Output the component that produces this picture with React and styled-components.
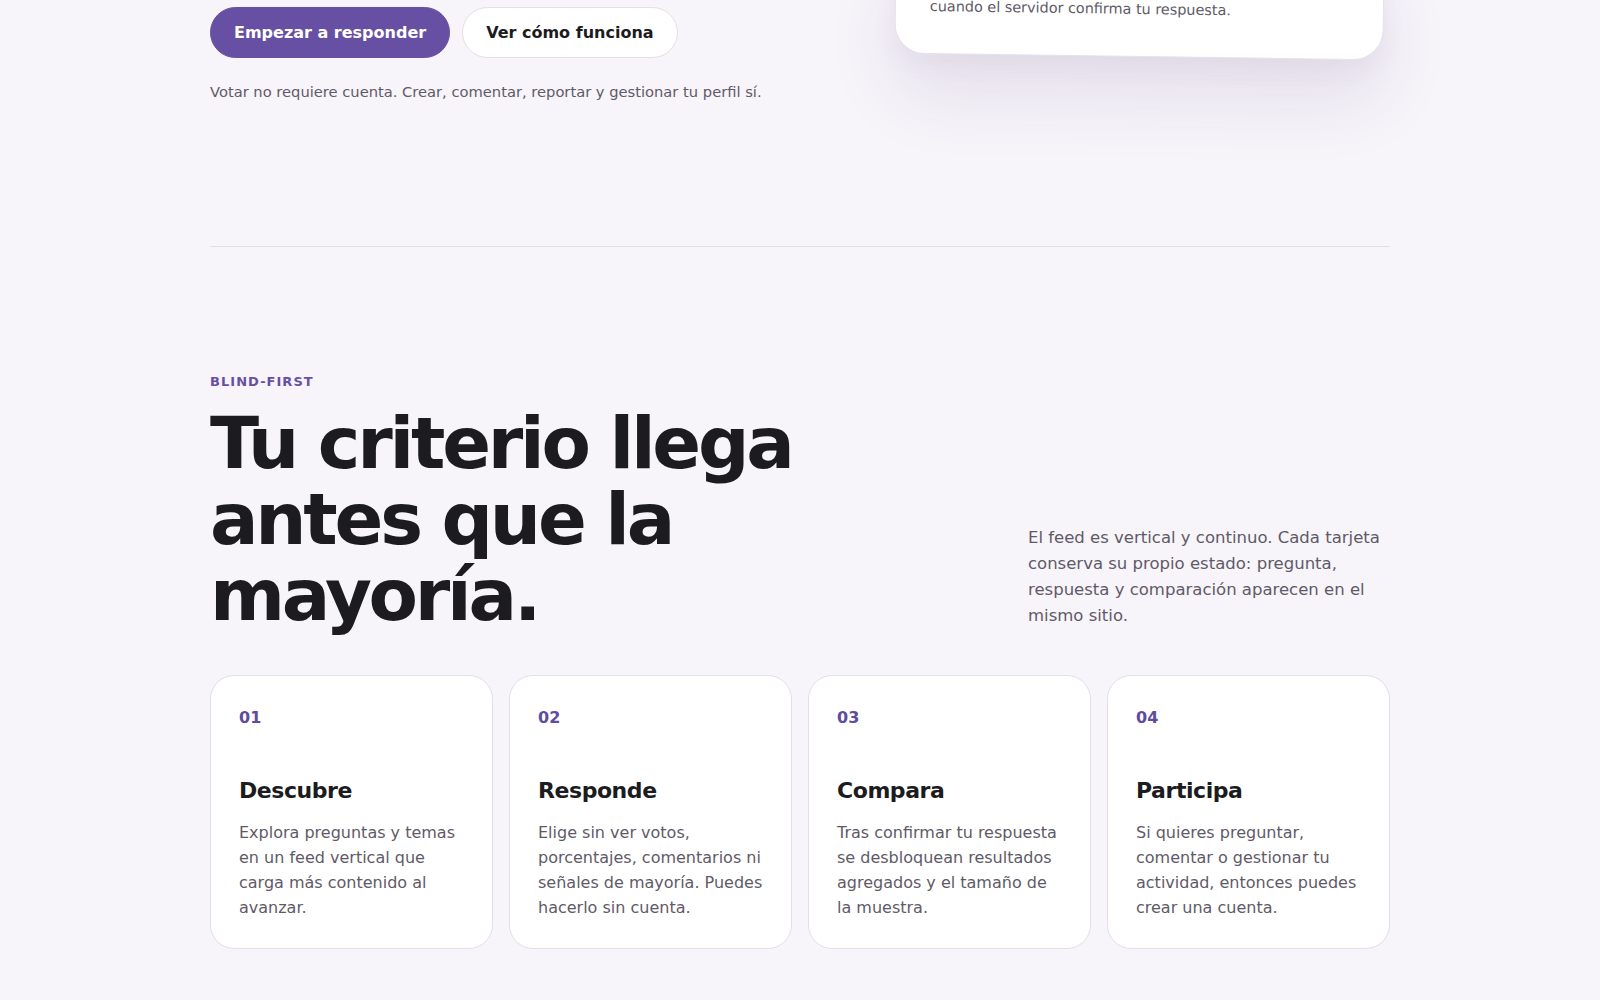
import React from "react"
import styled, { createGlobalStyle } from "styled-components"

const GlobalStyle = createGlobalStyle`
  * { box-sizing: border-box; }
  html, body {
    margin: 0;
    padding: 0;
    background: #f7f4fa;
    font-family: "DejaVu Sans", "Noto Sans", sans-serif;
    color: #1c1b20;
    overflow-x: hidden;
  }
  p, h1, h2, h3 { margin: 0; }
`

const steps = [
  {
    num: "01",
    title: "Descubre",
    text: "Explora preguntas y temas en un feed vertical que carga más contenido al avanzar.",
  },
  {
    num: "02",
    title: "Responde",
    text: "Elige sin ver votos, porcentajes, comentarios ni señales de mayoría. Puedes hacerlo sin cuenta.",
  },
  {
    num: "03",
    title: "Compara",
    text: "Tras confirmar tu respuesta se desbloquean resultados agregados y el tamaño de la muestra.",
  },
  {
    num: "04",
    title: "Participa",
    text: "Si quieres preguntar, comentar o gestionar tu actividad, entonces puedes crear una cuenta.",
  },
]

const App = () => {
  return (
    <>
      <GlobalStyle />
      <Page>
        <Hero>
          <HeroLeft>
            <Actions>
              <Button primary>Empezar a responder</Button>
              <Button>Ver cómo funciona</Button>
            </Actions>
            <Note>Votar no requiere cuenta. Crear, comentar, reportar y gestionar tu perfil sí.</Note>
          </HeroLeft>

          <PreviewCard>
            <PreviewText>
              <span>Los porcentajes y comentarios solo aparecen</span>
              <span>cuando el servidor confirma tu respuesta.</span>
            </PreviewText>
          </PreviewCard>
        </Hero>

        <Divider />

        <Section>
          <Eyebrow>Blind-first</Eyebrow>
          <SectionHead>
            <Title>Tu criterio llega antes que la mayoría.</Title>
            <Lead>
              El feed es vertical y continuo. Cada tarjeta conserva su propio estado: pregunta,
              respuesta y comparación aparecen en el mismo sitio.
            </Lead>
          </SectionHead>

          <Steps>
            {steps.map(s => (
              <Step key={s.num}>
                <StepNum>{s.num}</StepNum>
                <StepTitle>{s.title}</StepTitle>
                <StepText>{s.text}</StepText>
              </Step>
            ))}
          </Steps>
        </Section>
      </Page>
    </>
  )
}

export default App

const Page = styled.main`
  width: 1180px;
  margin: 0 auto;
  padding-bottom: 52px;
`

const Hero = styled.section`
  display: grid;
  grid-template-columns: 1fr 495px;
  align-items: start;
  padding-top: 7px;
  padding-bottom: 143px;
`

const HeroLeft = styled.div`
  display: flex;
  flex-direction: column;
`

const Actions = styled.div`
  display: flex;
  gap: 12px;
`

const Button = styled.button`
  height: 51px;
  padding: 0 23px;
  border-radius: 999px;
  font-family: inherit;
  font-size: 16px;
  font-weight: 700;
  cursor: pointer;
  border: 1px solid ${p => (p.primary ? "#6750a4" : "#e3deea")};
  background: ${p => (p.primary ? "#6750a4" : "#ffffff")};
  color: ${p => (p.primary ? "#ffffff" : "#1c1b20")};
`

const Note = styled.p`
  margin-top: 23px;
  font-size: 14.7px;
  line-height: 22px;
  color: #5f5a67;
`

const PreviewCard = styled.div`
  margin-top: -62px;
  margin-right: 6px;
  background: #ffffff;
  border: 1px solid #e6e1ec;
  border-radius: 30px;
  padding: 32px 34px 36px;
  transform: rotate(0.8deg);
  box-shadow: 0 40px 70px rgba(70, 50, 110, 0.1), 0 10px 24px rgba(70, 50, 110, 0.05);
`

const PreviewText = styled.p`
  font-size: 14.4px;
  line-height: 21px;
  color: #5f5a67;

  span {
    display: block;
  }
`

const Divider = styled.hr`
  margin: 0;
  border: 0;
  height: 1px;
  background: #e2dde8;
`

const Section = styled.section`
  padding-top: 126px;
`

const Eyebrow = styled.p`
  font-size: 13px;
  line-height: 18px;
  font-weight: 700;
  letter-spacing: 0.08em;
  text-transform: uppercase;
  color: #6750a4;
`

const SectionHead = styled.div`
  display: grid;
  grid-template-columns: 1fr 362px;
  align-items: end;
  margin-top: 14px;
`

const Title = styled.h2`
  max-width: 640px;
  font-size: 72px;
  line-height: 76px;
  font-weight: 700;
  letter-spacing: -0.045em;
  color: #1c1b20;
`

const Lead = styled.p`
  margin-bottom: 4px;
  font-size: 16.5px;
  line-height: 26px;
  color: #5f5a67;
`

const Steps = styled.div`
  display: grid;
  grid-template-columns: repeat(4, 1fr);
  gap: 16px;
  margin-top: 42px;
`

const Step = styled.article`
  background: #ffffff;
  border: 1px solid #e3deea;
  border-radius: 24px;
  padding: 31px 28px 28px;
`

const StepNum = styled.p`
  font-size: 16px;
  line-height: 21px;
  font-weight: 700;
  color: #5e4c9c;
  margin-bottom: 48px;
`

const StepTitle = styled.h3`
  font-size: 22px;
  line-height: 29px;
  font-weight: 700;
  letter-spacing: -0.02em;
  color: #1c1b20;
  margin-bottom: 15px;
`

const StepText = styled.p`
  font-size: 16px;
  line-height: 25px;
  color: #5f5a67;
`
